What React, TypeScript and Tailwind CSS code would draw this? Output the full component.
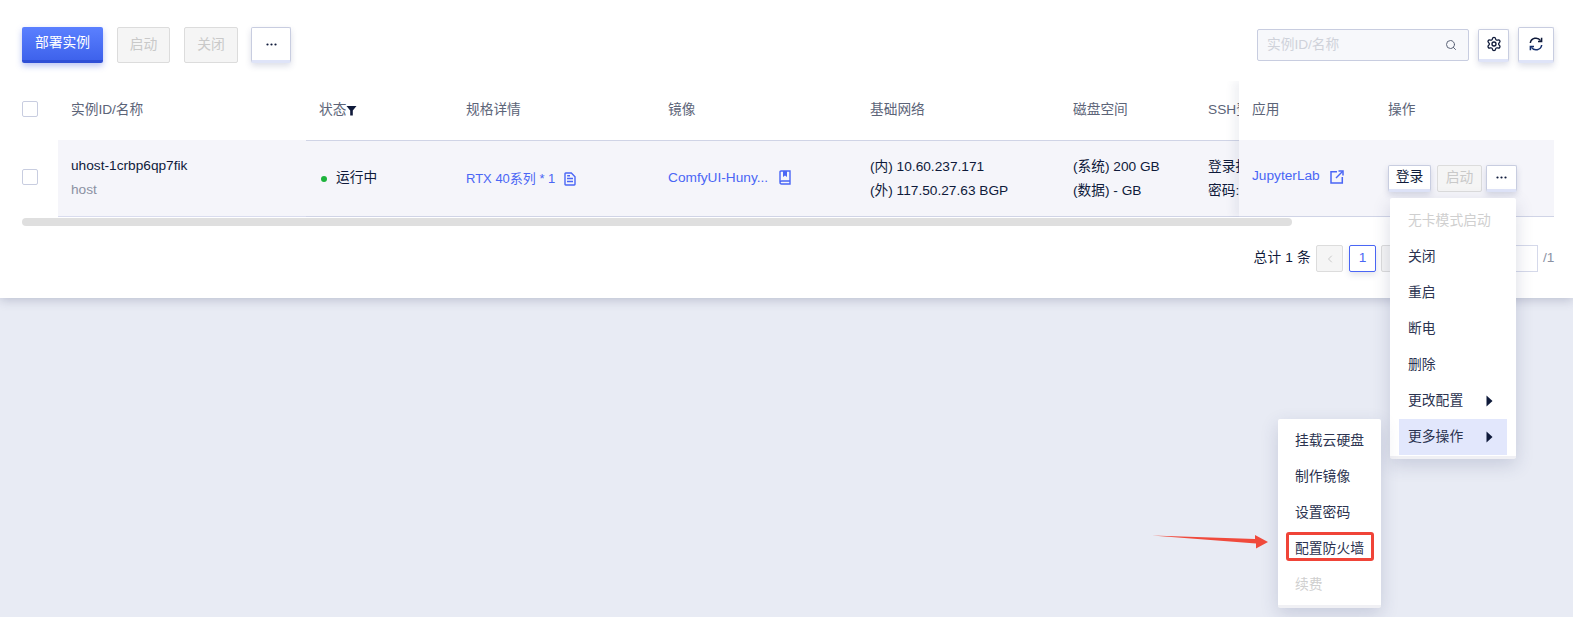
import { Search, Settings, ChevronLeft } from "lucide-react";

const font = "[font-family:'Liberation_Sans','Noto_Sans_CJK_SC',sans-serif]";

function Ghost({ children, className = "" }: { children: React.ReactNode; className?: string }) {
  return (
    <button className={`flex items-center justify-center rounded-[2px] border border-[#c8cde0] border-b-[3px] border-b-[#dfe4f8] bg-white text-[#0f1a3a] shadow-[0_3px_6px_rgba(60,70,120,0.18)] ${className}`}>
      {children}
    </button>
  );
}

function Disabled({ children, className = "" }: { children: React.ReactNode; className?: string }) {
  return (
    <button className={`flex items-center justify-center rounded-[2px] border border-[#dcdcdc] bg-[#f5f5f5] text-[#c9c9c9] ${className}`}>
      {children}
    </button>
  );
}

function Dots() {
  return (
    <svg width="11" height="3" viewBox="0 0 11 3" className="text-[#0f1a3a]">
      <circle cx="1.5" cy="1.5" r="1.1" fill="currentColor" />
      <circle cx="5.5" cy="1.5" r="1.1" fill="currentColor" />
      <circle cx="9.5" cy="1.5" r="1.1" fill="currentColor" />
    </svg>
  );
}

function Check() {
  return <span className="mb-[3px] block h-[16px] w-[16px] rounded-[2px] border border-[#c8cde0] bg-white" />;
}

function Caret() {
  return (
    <svg width="7" height="12" viewBox="0 0 7 12" className="text-[#0f1a3a]">
      <path d="M0.5 0.5 L6.5 6 L0.5 11.5 Z" fill="currentColor" />
    </svg>
  );
}

function MenuItem({ label, disabled, caret, active, lift }: { label: string; disabled?: boolean; caret?: boolean; active?: boolean; lift?: boolean }) {
  return (
    <div className={`flex h-[36px] items-center justify-between whitespace-nowrap pr-[14px] text-[13.8px] ${lift ? "pl-[9px]" : "pl-[8px] pt-[2px]"} ${active ? "bg-[#e2e7fc]" : ""} ${disabled ? "text-[#cfcfcf]" : "text-[#2b3350]"}`}>
      <span>{label}</span>
      {caret && <Caret />}
    </div>
  );
}

function Refresh() {
  return (
    <svg width="16" height="16" viewBox="0 0 16 16" fill="none" stroke="#0f1a3a" strokeWidth="1.5">
      <path d="M2.3 7 A5.7 5.7 0 0 1 12.6 4.6" />
      <path d="M13.6 1.8 V5.4 H10" />
      <path d="M13.7 9 A5.7 5.7 0 0 1 3.4 11.4" stroke="#16306e" />
      <path d="M2.4 14.2 V10.6 H6" stroke="#16306e" />
    </svg>
  );
}

function Doc() {
  return (
    <svg width="12" height="14" viewBox="0 0 12 14" fill="none" stroke="currentColor" strokeWidth="1.4" className="ml-[9px]">
      <path d="M1 1.7 Q1 1 1.7 1 H7.3 L11 4.7 V12.3 Q11 13 10.3 13 H1.7 Q1 13 1 12.3 Z" />
      <path d="M3 6.5 H9 M3 9.5 H9 M3.2 3.8 H6" />
    </svg>
  );
}

function Book() {
  return (
    <svg width="12" height="15" viewBox="0 0 12 15" fill="none" stroke="currentColor" strokeWidth="1.4" className="mb-[2px] ml-[11px]">
      <path d="M1 12 V2 Q1 1 2 1 H11 V14 H2.5 Q1 14 1 12.5 Q1 11 2.5 11 H11" />
      <path d="M4 1 V7 L6 5.6 L8 7 V1 Z" fill="currentColor" stroke="none" />
    </svg>
  );
}

function Launch() {
  return (
    <svg width="14" height="14" viewBox="0 0 14 14" fill="none" stroke="currentColor" strokeWidth="1.5" className="mb-[3px] ml-[10px]">
      <path d="M7 1.7 H1 V13 H12.3 V7" />
      <path d="M6 8 L12.5 1.5" />
      <path d="M8.5 1 H13 V5.5" />
    </svg>
  );
}

const COLS = "grid-cols-[36px_248px_147px_202px_202px_203px_135px_1fr]";
const HEAD = "flex items-center pb-[1px] pl-[13px] text-[13.7px] text-[#5c6478]";
const CELL = "flex flex-col justify-center pl-[13px] text-[13.7px] leading-[24px] text-[#0f1a3a]";
const ROW = "border-y border-[#d0d4e6] bg-[#f5f5fa]";
const CLIP = "block w-[31px] overflow-hidden whitespace-nowrap";

export default function App() {
  return (
    <div className={`relative h-[617px] w-[1573px] overflow-hidden bg-[#e8ebf4] ${font}`}>
      <div className="h-[298px] bg-white pl-[22px] pr-[19px] pt-[27px] shadow-[0_2px_10px_rgba(50,60,100,0.25)]">
        {/* toolbar */}
        <div className="flex h-[36px] items-center">
          <button className="h-[36px] w-[81px] rounded-[2px] border-b-[3px] border-b-[#2f4fd6] bg-gradient-to-b from-[#5b80ff] to-[#3e62ec] text-[13.8px] text-white shadow-[0_3px_6px_rgba(60,90,220,0.35)]">
            部署实例
          </button>
          <Disabled className="ml-[14px] h-[36px] w-[53px] text-[13.8px]">启动</Disabled>
          <Disabled className="ml-[14px] h-[36px] w-[54px] text-[13.8px]">关闭</Disabled>
          <Ghost className="ml-[13px] h-[36px] w-[40px]"><Dots /></Ghost>
          <div className="ml-auto flex h-[32px] w-[212px] items-center justify-between rounded-[2px] border border-[#c8cde0] bg-[#f7f8fb] pl-[9px] pr-[11px] text-[13.7px] text-[#cfd2da]">
            <span>实例ID/名称</span>
            <Search size={12} strokeWidth={2} className="text-[#5c6478]" />
          </div>
          <Ghost className="ml-[9px] h-[33px] w-[31px]"><Settings size={16} strokeWidth={2} /></Ghost>
          <Ghost className="ml-[9px] h-[36px] w-[36px]"><Refresh /></Ghost>
        </div>

        {/* table */}
        <div className="relative mt-[18px] h-[136px] overflow-hidden">
          <div className={`grid h-[59px] ${COLS}`}>
            <div className="flex items-center"><Check /></div>
            <div className={HEAD}>实例ID/名称</div>
            <div className={HEAD}>
              状态
              <svg width="11" height="11" viewBox="0 0 11 11" className="mt-[1px] text-[#0f1a3a]">
                <path d="M0.5 1 H10.5 L6.8 5.5 V10.5 H4.2 V5.5 Z" fill="currentColor" />
              </svg>
            </div>
            <div className={HEAD}>规格详情</div>
            <div className={HEAD}>镜像</div>
            <div className={HEAD}>基础网络</div>
            <div className={HEAD}>磁盘空间</div>
            <div className={HEAD}><span className={CLIP}>SSH登录</span></div>
          </div>
          <div className={`grid h-[77px] ${COLS}`}>
            <div className="flex items-center"><Check /></div>
            <div className={`${CELL} border-b border-[#d9dcee] bg-[#f5f5fa]`}>
              <span>uhost-1crbp6qp7fik</span>
              <span className="text-[#8b91a3]">host</span>
            </div>
            <div className={`flex items-center pl-[15px] text-[13.7px] text-[#0f1a3a] ${ROW}`}>
              <span className="h-[6px] w-[6px] rounded-full bg-[#1db33c]" />
              <span className="ml-[9px]">运行中</span>
            </div>
            <div className={`flex items-center pl-[13px] text-[13px] text-[#4a66f5] ${ROW}`}>
              <span>RTX 40系列 * 1</span>
              <Doc />
            </div>
            <div className={`flex items-center pl-[13px] text-[13.7px] text-[#4a66f5] ${ROW}`}>
              <span>ComfyUI-Huny...</span>
              <Book />
            </div>
            <div className={`${CELL} ${ROW}`}>
              <span>(内) 10.60.237.171</span>
              <span>(外) 117.50.27.63 BGP</span>
            </div>
            <div className={`${CELL} ${ROW}`}>
              <span>(系统) 200 GB</span>
              <span>(数据) - GB</span>
            </div>
            <div className={`${CELL} ${ROW}`}>
              <span className={CLIP}>登录指令</span>
              <span className={CLIP}>密码:</span>
            </div>
          </div>

          {/* fixed right columns */}
          <div className="absolute right-0 top-0 grid h-[136px] w-[315px] grid-cols-[136px_1fr] grid-rows-[59px_77px] bg-white shadow-[-6px_0_8px_rgba(60,70,120,0.07)]">
            <div className="flex items-center pb-[1px] pl-[13px] text-[13.7px] text-[#5c6478]">应用</div>
            <div className="flex items-center pb-[1px] pl-[13px] text-[13.7px] text-[#5c6478]">操作</div>
            <div className="flex items-center border-b border-[#d0d4e6] bg-[#f5f5fa] pl-[13px] text-[13.7px] text-[#4a66f5]">
              <span className="mb-[3px]">JupyterLab</span>
              <Launch />
            </div>
            <div className="flex items-center border-b border-[#d0d4e6] bg-[#f5f5fa] pl-[13px]">
              <div className="flex items-center">
                <Ghost className="h-[27px] w-[43px] text-[13.8px]">登录</Ghost>
                <Disabled className="ml-[6px] h-[27px] w-[45px] text-[13.8px]">启动</Disabled>
                <Ghost className="ml-[4px] h-[27px] w-[31px]"><Dots /></Ghost>
              </div>
            </div>
          </div>
        </div>

        {/* scrollbar */}
        <div className="mt-px h-[8px] w-[1270px] rounded-full bg-[#dfdfdf]" />

        {/* pagination */}
        <div className="mt-[19px] flex h-[27px] items-center justify-end text-[13.7px] text-[#0f1a3a]">
          <span className="tracking-[0.2px]">总计 1 条</span>
          <Disabled className="ml-[5px] h-[27px] w-[27px]"><ChevronLeft size={12} /></Disabled>
          <span className="ml-[6px] flex h-[27px] w-[27px] items-center justify-center rounded-[2px] border border-[#4a66f5] text-[#4a66f5] shadow-[0_3px_6px_rgba(60,70,120,0.15)]">1</span>
          <Disabled className="ml-[5px] h-[27px] w-[27px]">&nbsp;</Disabled>
          <span className="ml-[12px] h-[27px] w-[118px] border border-[#d5d9ea] bg-white" />
          <span className="ml-[5px] w-[11px] text-[#8b91a3]">/1</span>
        </div>
      </div>

      {/* dropdown */}
      <div className="absolute left-[1390px] top-[198px] w-[126px] rounded-[2px] border-b-[3px] border-b-[#f0f0f4] bg-white px-[9px] pb-[1px] pt-[5px] shadow-[0_6px_18px_rgba(50,60,110,0.18)]">
        <MenuItem label="无卡模式启动" disabled lift />
        <MenuItem label="关闭" lift />
        <MenuItem label="重启" lift />
        <MenuItem label="断电" lift />
        <MenuItem label="删除" lift />
        <MenuItem label="更改配置" caret lift />
        <MenuItem label="更多操作" caret active lift />
      </div>

      {/* submenu */}
      <div className="absolute left-[1278px] top-[419px] w-[103px] rounded-[2px] border-b-[3px] border-b-[#f0f0f4] bg-white px-[9px] py-[3px] shadow-[0_6px_18px_rgba(50,60,110,0.18)]">
        <MenuItem label="挂载云硬盘" />
        <MenuItem label="制作镜像" />
        <MenuItem label="设置密码" />
        <MenuItem label="配置防火墙" />
        <MenuItem label="续费" disabled />
      </div>

      {/* annotation */}
      <div className="absolute left-[1286px] top-[532px] h-[29px] w-[88px] rounded-[3px] border-[3px] border-[#f04438]" />
      <svg className="absolute left-[1150px] top-[532px]" width="122" height="18" viewBox="0 0 122 18">
        <path d="M2 3.5 L105 7 L105 3 L118 10 L106 16.5 L106 11.5 Z" fill="#f04a3c" />
      </svg>
    </div>
  );
}
